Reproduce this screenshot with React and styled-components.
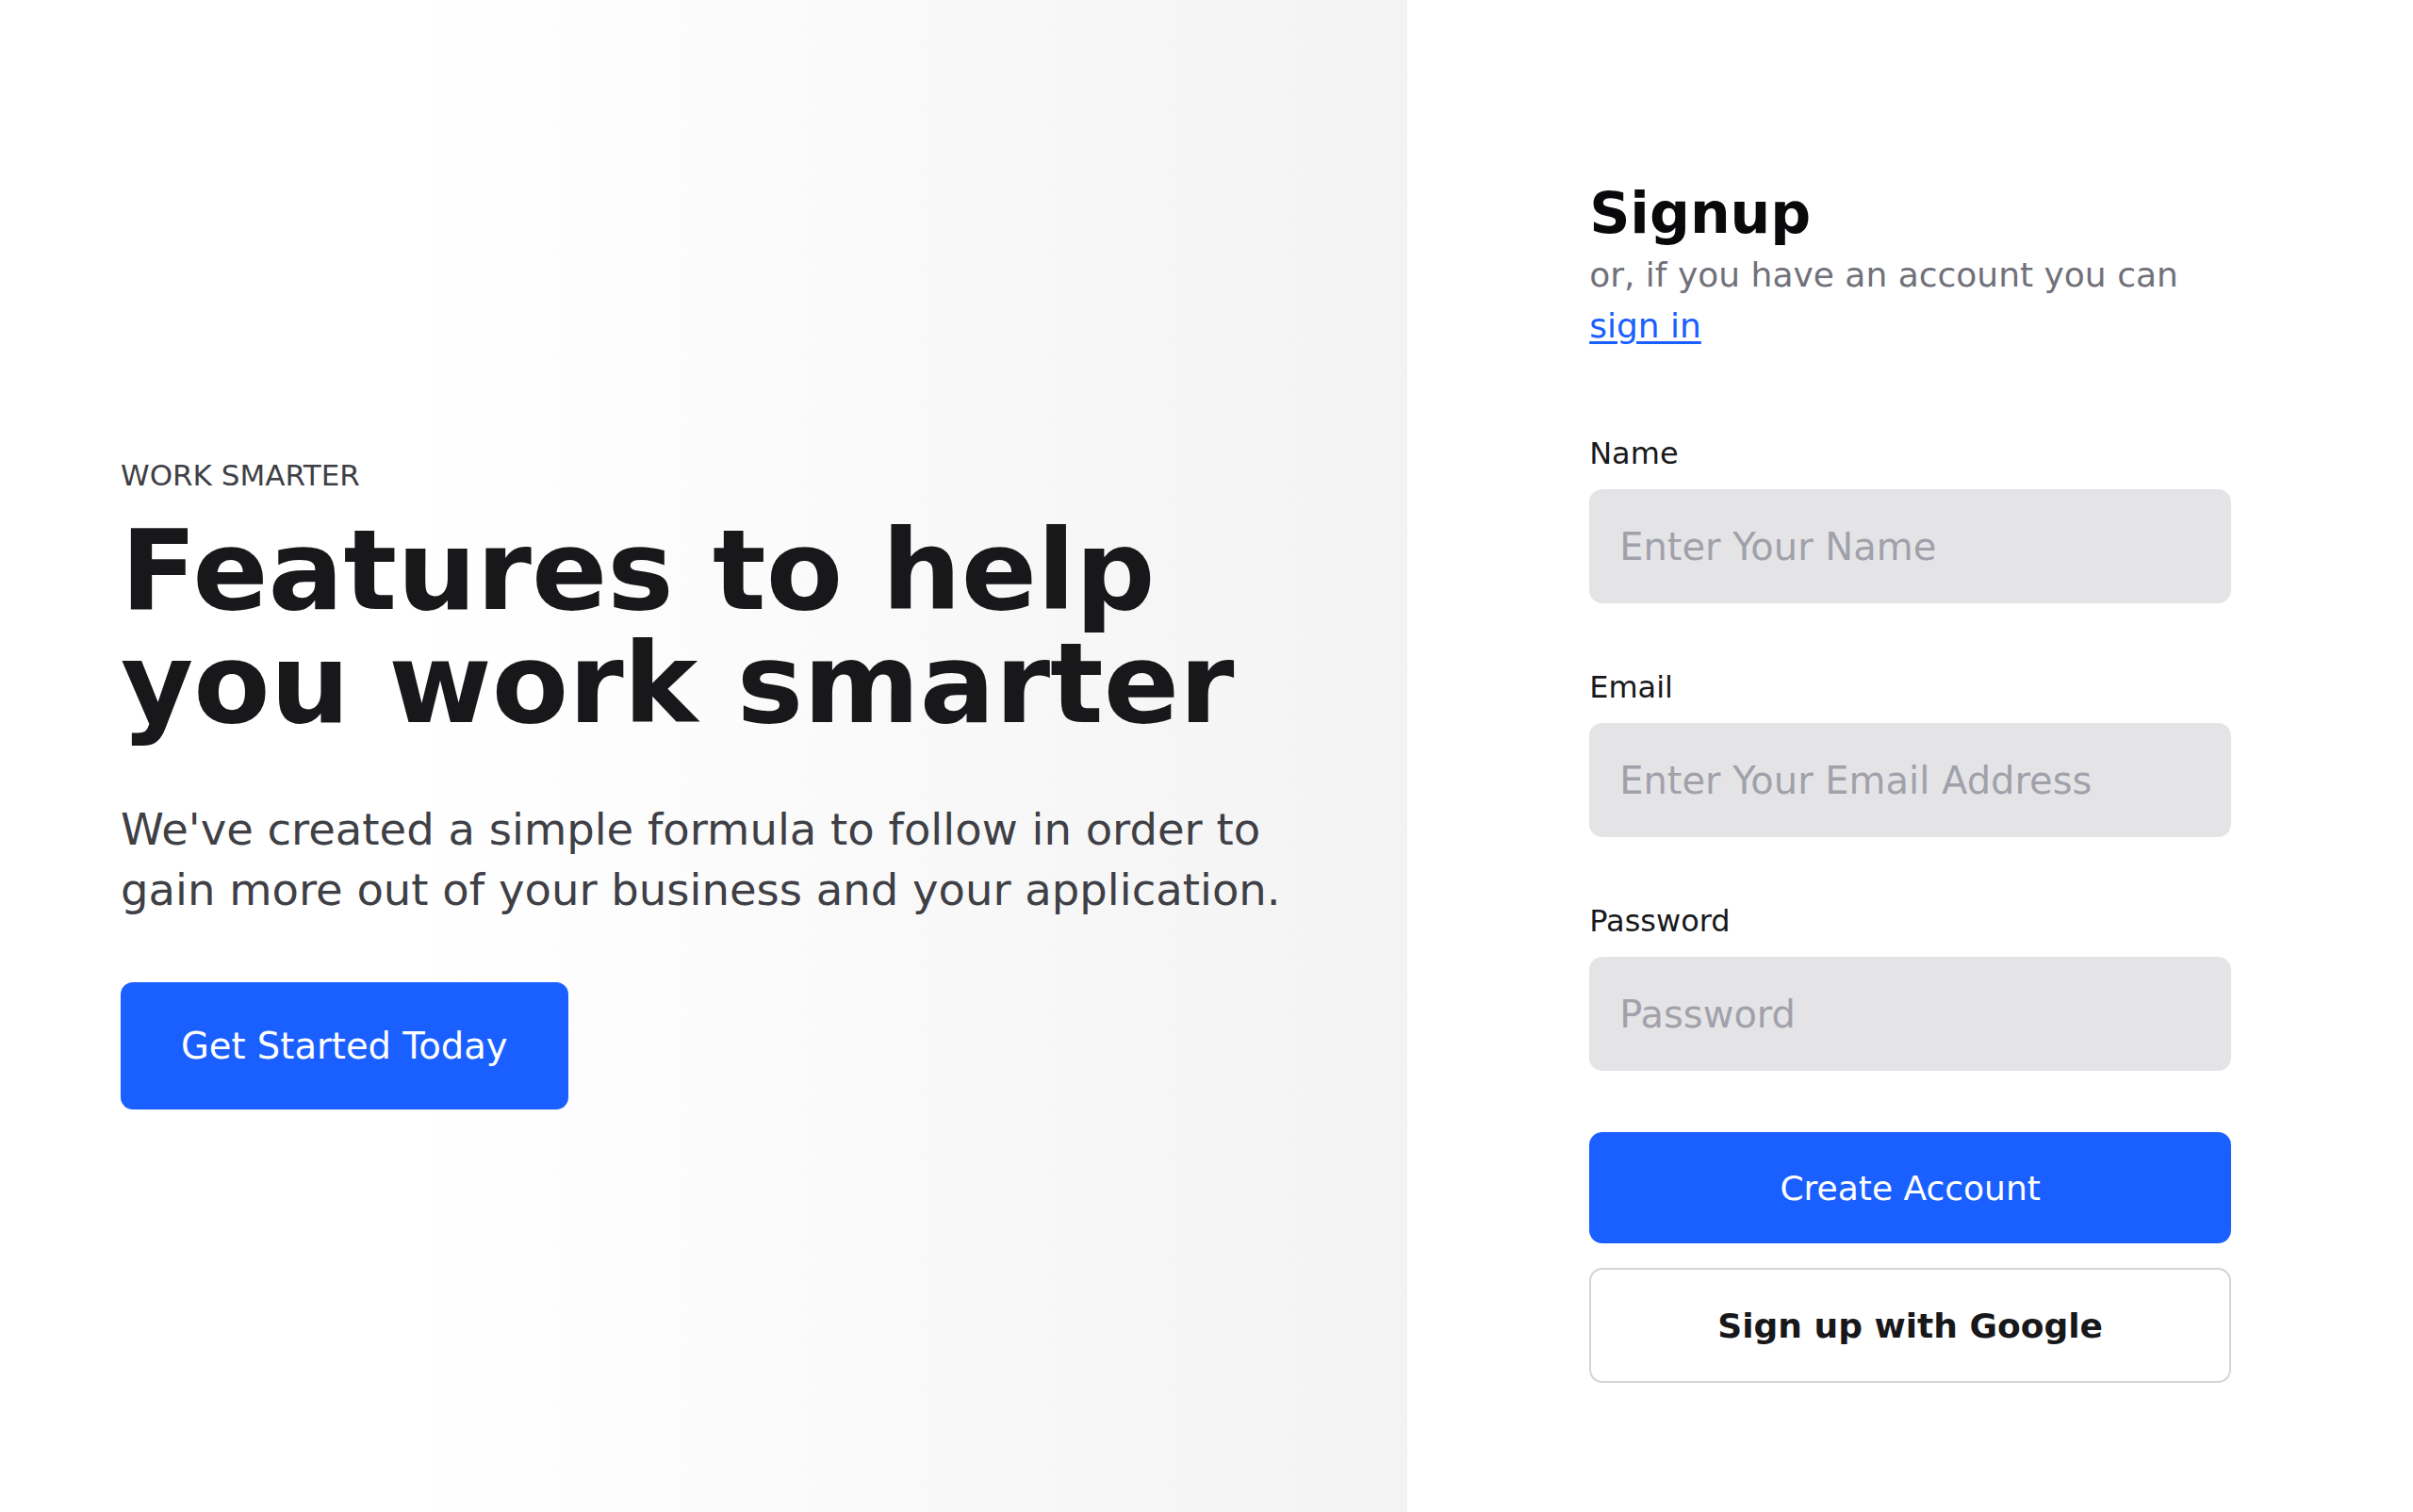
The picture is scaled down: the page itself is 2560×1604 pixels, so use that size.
import React from "react";
import styled, { createGlobalStyle } from "styled-components";

const GlobalStyle = createGlobalStyle`
  * { box-sizing: border-box; }
  html, body { margin: 0; padding: 0; }
  body {
    font-family: "DejaVu Sans", "Noto Sans", sans-serif;
    background: #ffffff;
    color: #18181b;
  }
  input, button { font-family: inherit; }
`;

const Page = styled.div`
  display: grid;
  grid-template-columns: 7fr 5fr;
  min-height: 1604px;
`;

const Hero = styled.section`
  display: flex;
  flex-direction: column;
  justify-content: center;
  align-items: flex-start;
  padding: 54px 128px 0 128px;
  background: linear-gradient(to right, #ffffff 0%, #ffffff 30%, #f3f3f4 100%);
`;

const Eyebrow = styled.p`
  margin: 0;
  font-size: 31px;
  line-height: 45px;
  color: #3f3f46;
  text-transform: uppercase;
`;

const Headline = styled.h1`
  margin: 18px 0 0 0;
  font-size: 118.5px;
  line-height: 120px;
  font-weight: 700;
  color: #18181b;
`;

const Lead = styled.p`
  margin: 63px 0 0 0;
  font-size: 46.5px;
  line-height: 64px;
  color: #3f3f46;
`;

const PrimaryButton = styled.button`
  margin-top: ${(p) => p.$mt || 0}px;
  display: inline-flex;
  align-items: center;
  justify-content: center;
  height: ${(p) => p.$h || 120}px;
  width: ${(p) => (p.$block ? "100%" : "auto")};
  padding: 0 64px;
  border: none;
  border-radius: ${(p) => p.$radius || 14}px;
  background: #1a5fff;
  color: #ffffff;
  font-size: ${(p) => p.$fs || 36}px;
  cursor: pointer;
`;

const FormSide = styled.section`
  display: flex;
  justify-content: center;
  align-items: center;
  padding-top: 52px;
  background: #ffffff;
`;

const Form = styled.form`
  width: 681px;
  display: flex;
  flex-direction: column;
`;

const Title = styled.h2`
  margin: 0;
  font-size: 60px;
  line-height: 75px;
  font-weight: 700;
  color: #09090b;
`;

const Sub = styled.p`
  margin: 1px 0 0 0;
  font-size: 36px;
  line-height: 54px;
  color: #71717a;
`;

const Link = styled.a`
  color: #1a5fff;
  text-decoration: underline;
  text-underline-offset: 4px;
`;

const Fields = styled.div`
  margin-top: 84px;
  display: flex;
  flex-direction: column;
  gap: 65px;
`;

const Field = styled.label`
  display: flex;
  flex-direction: column;
  gap: 14px;
`;

const LabelText = styled.span`
  font-size: 32px;
  line-height: 48px;
  color: #18181b;
`;

const Input = styled.input`
  height: 121px;
  padding: 0 32px;
  border: none;
  border-radius: 14px;
  background: #e4e4e7;
  font-size: 40px;
  color: #18181b;
  outline: none;
  &::placeholder {
    color: #a1a1aa;
  }
`;

const Actions = styled.div`
  margin-top: 65px;
  display: flex;
  flex-direction: column;
  gap: 26px;
`;

const OutlineButton = styled.button`
  height: 122px;
  width: 100%;
  border: 2px solid #d4d4d8;
  border-radius: 14px;
  background: #ffffff;
  color: #18181b;
  font-size: 36px;
  font-weight: 700;
  cursor: pointer;
`;

export default function App() {
  return (
    <>
      <GlobalStyle />
      <Page>
        <Hero>
          <Eyebrow>Work smarter</Eyebrow>
          <Headline>
            Features to help
            <br />
            you work smarter
          </Headline>
          <Lead>
            We've created a simple formula to follow in order to gain more out
            of your business and your application.
          </Lead>
          <PrimaryButton type="button" $mt={66} $h={135} $fs={38.5} $radius={13}>
            Get Started Today
          </PrimaryButton>
        </Hero>
        <FormSide>
          <Form onSubmit={(e) => e.preventDefault()}>
            <Title>Signup</Title>
            <Sub>
              or, if you have an account you can <Link href="#">sign in</Link>
            </Sub>
            <Fields>
              <Field>
                <LabelText>Name</LabelText>
                <Input type="text" placeholder="Enter Your Name" />
              </Field>
              <Field>
                <LabelText>Email</LabelText>
                <Input type="email" placeholder="Enter Your Email Address" />
              </Field>
              <Field>
                <LabelText>Password</LabelText>
                <Input type="password" placeholder="Password" />
              </Field>
            </Fields>
            <Actions>
              <PrimaryButton type="submit" $block $h={118} $fs={36} $radius={14}>
                Create Account
              </PrimaryButton>
              <OutlineButton type="button">Sign up with Google</OutlineButton>
            </Actions>
          </Form>
        </FormSide>
      </Page>
    </>
  );
}
